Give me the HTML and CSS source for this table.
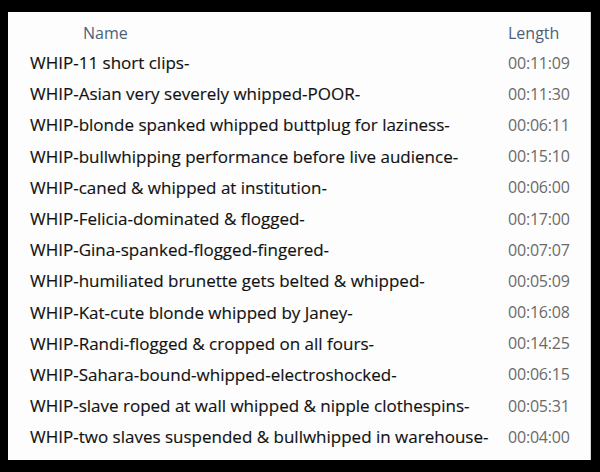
FILE: index.html
```html
<!DOCTYPE html>
<html>
<head>
<meta charset="utf-8">
<link rel="stylesheet" href="styles.css">
</head>
<body>
<div class="panel">
  <div class="row head">
    <span class="name">Name</span>
    <span class="len">Length</span>
  </div>
  <div class="row"><span class="name">WHIP-11 short clips-</span><span class="len">00:11:09</span></div>
  <div class="row"><span class="name">WHIP-Asian very severely whipped-POOR-</span><span class="len">00:11:30</span></div>
  <div class="row"><span class="name">WHIP-blonde spanked whipped buttplug for laziness-</span><span class="len">00:06:11</span></div>
  <div class="row"><span class="name">WHIP-bullwhipping performance before live audience-</span><span class="len">00:15:10</span></div>
  <div class="row"><span class="name">WHIP-caned &amp; whipped at institution-</span><span class="len">00:06:00</span></div>
  <div class="row"><span class="name">WHIP-Felicia-dominated &amp; flogged-</span><span class="len">00:17:00</span></div>
  <div class="row"><span class="name">WHIP-Gina-spanked-flogged-fingered-</span><span class="len">00:07:07</span></div>
  <div class="row"><span class="name">WHIP-humiliated brunette gets belted &amp; whipped-</span><span class="len">00:05:09</span></div>
  <div class="row"><span class="name">WHIP-Kat-cute blonde whipped by Janey-</span><span class="len">00:16:08</span></div>
  <div class="row"><span class="name">WHIP-Randi-flogged &amp; cropped on all fours-</span><span class="len">00:14:25</span></div>
  <div class="row"><span class="name">WHIP-Sahara-bound-whipped-electroshocked-</span><span class="len">00:06:15</span></div>
  <div class="row"><span class="name">WHIP-slave roped at wall whipped &amp; nipple clothespins-</span><span class="len">00:05:31</span></div>
  <div class="row"><span class="name">WHIP-two slaves suspended &amp; bullwhipped in warehouse-</span><span class="len">00:04:00</span></div>
</div>
</body>
</html>
```
FILE: styles.css
```css
html, body {
  margin: 0;
  padding: 0;
  background: #000;
  width: 600px;
  height: 472px;
  overflow: hidden;
}
.panel {
  margin: 12px 0 0 8px;
  width: 583px;
  height: 448px;
  background: #fdfdfd;
  border-right: 1px solid #d4d4d4;
  box-sizing: border-box;
  padding: 7px 0 0 22px;
  font-family: "Open Sans", sans-serif;
  font-size: 17px;
}
.row {
  display: flex;
  height: 31.2px;
  align-items: center;
}
.row.head {
  height: 28px;
}
.name {
  width: 478px;
  color: #111;
  white-space: nowrap;
  -webkit-text-stroke: 0.15px #111;
}
.len {
  color: #6a6a6a;
  font-size: 16px;
  letter-spacing: -0.2px;
}
.head .name {
  color: #4d6079;
  -webkit-text-stroke: 0;
  font-size: 16px;
  padding-left: 53px;
  width: 425px;
}
.head .len {
  color: #4d6079;
  letter-spacing: 0;
}
```
